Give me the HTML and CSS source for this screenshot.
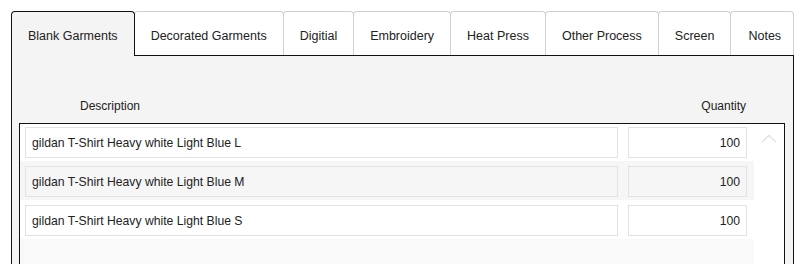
FILE: index.html
```html
<!DOCTYPE html>
<html lang="en">
<head>
    <meta charset="UTF-8">
    <meta name="viewport" content="width=device-width, initial-scale=1.0">
    <title>Order lines</title>
    <link rel="stylesheet" href="styles.css">
</head>
<body>
    <div class="wrapper">
        <ul class="tabs">
            <li class="tab active">Blank Garments</li>
            <li class="tab">Decorated Garments</li>
            <li class="tab">Digitial</li>
            <li class="tab">Embroidery</li>
            <li class="tab">Heat Press</li>
            <li class="tab">Other Process</li>
            <li class="tab">Screen</li>
            <li class="tab last">Notes</li>
        </ul>
        <div class="panel">
            <div class="list-header">
                <span>Description</span>
                <span>Quantity</span>
            </div>
            <div class="list">
                <div class="rows">
                    <div class="row">
                        <input class="desc" type="text" value="gildan T-Shirt Heavy white Light Blue L">
                        <input class="qty" type="text" value="100">
                    </div>
                    <div class="row alt">
                        <input class="desc" type="text" value="gildan T-Shirt Heavy white Light Blue M">
                        <input class="qty" type="text" value="100">
                    </div>
                    <div class="row">
                        <input class="desc" type="text" value="gildan T-Shirt Heavy white Light Blue S">
                        <input class="qty" type="text" value="100">
                    </div>
                    <div class="filler"></div>
                </div>
                <div class="scrollbar">
                    <svg width="16" height="10" viewBox="0 0 16 10">
                        <polyline points="1,8 8,1.5 15,8" fill="none" stroke="#e2e2e2" stroke-width="1.3"/>
                    </svg>
                </div>
            </div>
        </div>
    </div>
</body>
</html>
```

FILE: styles.css
```css
body {
    margin: 0;
    background-color: #fff;
    font-family: "Liberation Sans", Arial, sans-serif;
    font-size: 12px;
    color: #222;
    overflow: hidden;
}
.wrapper {
    padding: 11px 15px 0 11px;
}
.tabs {
    display: flex;
    list-style: none;
    margin: 0;
    padding: 0;
    position: relative;
    z-index: 1;
    font-size: 12.5px;
}
.tab {
    padding: 17px 16px 12px 16px;
    line-height: 14px;
    background-color: #fff;
    border: 1px solid #d0d0d0;
    border-bottom: none;
    border-radius: 4px 4px 0 0;
    margin-left: -1px;
    white-space: nowrap;
}
.tab.active {
    margin-left: 0;
    background-color: #f4f4f4;
    border-color: #111;
    padding-bottom: 13px;
    margin-bottom: -1px;
    z-index: 2;
}
.tab.last {
    flex: 1;
    padding-left: 17px;
    padding-right: 0;
}
.panel {
    background-color: #f4f4f4;
    border: 1px solid #111;
    border-bottom: none;
    height: 209px;
    padding: 0 8px 0 7px;
}
.list-header {
    display: flex;
    justify-content: space-between;
    line-height: 16px;
    margin-top: 42px;
    padding: 0 39px 0 61px;
}
.list {
    display: flex;
    margin-top: 9px;
    background-color: #fff;
    border: 1px solid #111;
    border-bottom: none;
    height: 141px;
}
.rows {
    width: 734px;
    display: flex;
    flex-direction: column;
}
.row {
    display: flex;
    gap: 10px;
    padding: 5px 7px 3px 5px;
}
.row:first-child {
    padding-top: 3px;
}
.row.alt {
    background-color: #f6f6f6;
}
.filler {
    flex: 1;
    background-color: #f9f9f9;
}
.row input {
    height: 31px;
    box-sizing: border-box;
    border: 1px solid #e2e2e2;
    background: transparent;
    font-family: "Liberation Sans", Arial, sans-serif;
    font-size: 12.2px;
    color: #222;
    margin: 0;
    padding: 0 6px;
}
.desc {
    width: 593px;
}
.qty {
    width: 119px;
    text-align: right;
}
.scrollbar {
    flex: 1;
    display: flex;
    justify-content: center;
    padding-top: 10px;
}
```
